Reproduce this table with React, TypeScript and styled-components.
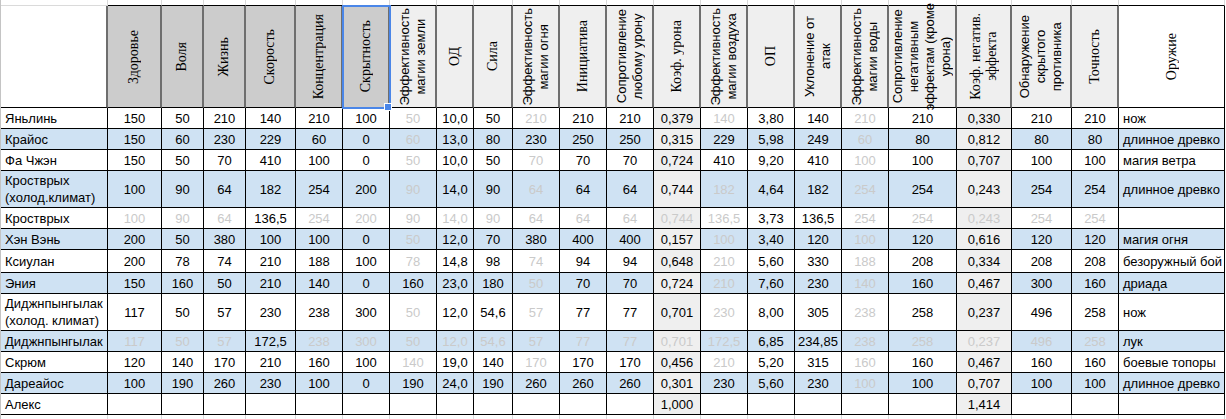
import React from "react";
import styled, { createGlobalStyle } from "styled-components";

const GlobalStyle = createGlobalStyle`
  html, body {
    margin: 0;
    padding: 0;
    background: #ffffff;
  }
  body {
    font-family: "Liberation Sans", Arial, sans-serif;
    color: #000;
  }
`;

const WIDTHS = [
  107, 54, 42, 42, 50, 47, 47, 47, 37, 39, 47, 47, 47, 47, 47, 47, 47, 47, 68,
  55, 60, 47, 106,
];

// columns with the light grey fill (Коэф. урона, Коэф. негатив. эффекта)
const GREY_COLS = [12, 18];

type Tone = "blank" | "dark" | "light" | "white";

interface IHead {
  label: string;
  serif: boolean;
  tone: Tone;
  selected?: boolean;
}

const HEADS: IHead[] = [
  { label: "Здоровье", serif: true, tone: "dark" },
  { label: "Воля", serif: true, tone: "dark" },
  { label: "Жизнь", serif: true, tone: "dark" },
  { label: "Скорость", serif: true, tone: "dark" },
  { label: "Концентрация", serif: true, tone: "dark" },
  { label: "Скрытность", serif: true, tone: "dark", selected: true },
  { label: "Эффективность\nмагии земли", serif: false, tone: "light" },
  { label: "ОД", serif: true, tone: "light" },
  { label: "Сила", serif: true, tone: "light" },
  { label: "Эффективность\nмагии огня", serif: false, tone: "light" },
  { label: "Инициатива", serif: true, tone: "light" },
  { label: "Сопротивление\nлюбому урону", serif: false, tone: "light" },
  { label: "Коэф. урона", serif: true, tone: "light" },
  { label: "Эффективность\nмагии воздуха", serif: false, tone: "light" },
  { label: "ОП", serif: true, tone: "light" },
  { label: "Уклонение от\nатак", serif: false, tone: "light" },
  { label: "Эффективность\nмагии воды", serif: false, tone: "light" },
  {
    label: "Сопротивление\nнегативным\nэффектам (кроме\nурона)",
    serif: false,
    tone: "light",
  },
  { label: "Коэф. негатив.\nэффекта", serif: true, tone: "light" },
  { label: "Обнаружение\nскрытого\nпротивника", serif: false, tone: "light" },
  { label: "Точность", serif: true, tone: "light" },
  { label: "Оружие", serif: true, tone: "white" },
];

interface IRow {
  name: string;
  blue: boolean;
  h: number;
  cells: string[];
}

// "~" marks a value shown in faded grey
const ROWS: IRow[] = [
  {
    name: "Яньлинь",
    blue: false,
    h: 21,
    cells: ["150", "50", "210", "140", "210", "100", "~50", "10,0", "50", "~210", "210", "210", "0,379", "~140", "3,80", "140", "~210", "210", "0,330", "210", "210", "нож"],
  },
  {
    name: "Крайос",
    blue: true,
    h: 21,
    cells: ["150", "60", "230", "229", "60", "0", "~60", "13,0", "80", "230", "250", "250", "0,315", "229", "5,98", "249", "~60", "80", "0,812", "80", "80", "длинное древко"],
  },
  {
    name: "Фа Чжэн",
    blue: false,
    h: 21,
    cells: ["150", "50", "70", "410", "100", "0", "~50", "10,0", "50", "~70", "70", "70", "0,724", "410", "9,20", "410", "~100", "100", "0,707", "100", "100", "магия ветра"],
  },
  {
    name: "Кростврых\n(холод.климат)",
    blue: true,
    h: 37,
    cells: ["100", "90", "64", "182", "254", "200", "~90", "14,0", "90", "~64", "64", "64", "0,744", "~182", "4,64", "182", "~254", "254", "0,243", "254", "254", "длинное древко"],
  },
  {
    name: "Кростврых",
    blue: false,
    h: 21,
    cells: ["~100", "~90", "~64", "136,5", "~254", "~200", "~90", "~14,0", "~90", "~64", "~64", "~64", "~0,744", "~136,5", "3,73", "136,5", "~254", "~254", "~0,243", "~254", "~254", ""],
  },
  {
    name: "Хэн Вэнь",
    blue: true,
    h: 21,
    cells: ["200", "50", "380", "100", "100", "0", "~50", "12,0", "70", "380", "400", "400", "0,157", "~100", "3,40", "120", "~100", "120", "0,616", "120", "120", "магия огня"],
  },
  {
    name: "Ксиулан",
    blue: false,
    h: 23,
    cells: ["200", "78", "74", "210", "188", "100", "~78", "14,8", "98", "~74", "94", "94", "0,648", "~210", "5,60", "330", "~188", "208", "0,334", "208", "208", "безоружный бой"],
  },
  {
    name: "Эния",
    blue: true,
    h: 21,
    cells: ["150", "160", "50", "210", "140", "0", "160", "23,0", "180", "~50", "70", "70", "0,724", "~210", "7,60", "230", "~140", "160", "0,467", "300", "160", "дриада"],
  },
  {
    name: "Диджнпынгылак\n(холод. климат)",
    blue: false,
    h: 37,
    cells: ["117", "50", "57", "230", "238", "300", "~50", "12,0", "54,6", "~57", "77", "77", "0,701", "~230", "8,00", "305", "~238", "258", "0,237", "496", "258", "нож"],
  },
  {
    name: "Диджнпынгылак",
    blue: true,
    h: 21,
    cells: ["~117", "~50", "~57", "172,5", "~238", "~300", "~50", "~12,0", "~54,6", "~57", "~77", "~77", "~0,701", "~172,5", "6,85", "234,85", "~238", "~258", "~0,237", "~496", "~258", "лук"],
  },
  {
    name: "Скрюм",
    blue: false,
    h: 21,
    cells: ["120", "140", "170", "210", "160", "100", "~140", "19,0", "140", "~170", "170", "170", "0,456", "~210", "5,20", "315", "~160", "160", "0,467", "160", "160", "боевые топоры"],
  },
  {
    name: "Дареайос",
    blue: true,
    h: 21,
    cells: ["100", "190", "260", "230", "100", "0", "190", "24,0", "190", "260", "260", "260", "0,301", "230", "5,60", "230", "~100", "100", "0,707", "100", "100", "длинное древко"],
  },
  {
    name: "Алекс",
    blue: false,
    h: 21,
    cells: ["", "", "", "", "", "", "", "", "", "", "", "", "1,000", "", "", "", "", "", "1,414", "", "", ""],
  },
];

const Sheet = styled.div<{ $rows: string }>`
  display: grid;
  grid-template-columns: ${WIDTHS.map((w) => `${w}px`).join(" ")};
  grid-template-rows: ${(p) => p.$rows};
  width: max-content;
  border-left: 1px solid #c4c4c4;
  overflow: hidden;
  height: 419px;
`;

const Gap = styled.div<{ $line: "none" | "light" | "dark" }>`
  box-sizing: border-box;
  border-right: 1px solid #dadada;
  border-bottom: ${(p) =>
    p.$line === "none"
      ? "0"
      : p.$line === "dark"
      ? "1px solid #000"
      : "1px solid #dadada"};
`;

const HEAD_BG: Record<Tone, string> = {
  blank: "#ffffff",
  dark: "#cccccc",
  light: "#efefef",
  white: "#ffffff",
};

const HeadCell = styled.div<{ $tone: Tone; $selected?: boolean }>`
  position: relative;
  box-sizing: border-box;
  display: flex;
  align-items: center;
  justify-content: center;
  background: ${(p) => HEAD_BG[p.$tone]};
  border-right: ${(p) =>
    p.$tone === "white" ? "1px solid #000" : "2px solid #6e6e6e"};
  border-bottom: 1px solid #000;
  outline: ${(p) => (p.$selected ? "2px solid #4a86e8" : "none")};
  outline-offset: -1px;
  z-index: ${(p) => (p.$selected ? 2 : 0)};
`;

const Handle = styled.span`
  position: absolute;
  right: -4px;
  bottom: -4px;
  width: 6px;
  height: 6px;
  background: #4a86e8;
  border: 1px solid #ffffff;
`;

const HeadLabel = styled.span<{ $serif: boolean }>`
  writing-mode: vertical-rl;
  transform: rotate(180deg);
  white-space: pre;
  text-align: center;
  font-family: ${(p) =>
    p.$serif
      ? '"Liberation Serif", "Times New Roman", serif'
      : '"Liberation Sans", Arial, sans-serif'};
  font-size: ${(p) => (p.$serif ? "14px" : "13px")};
  line-height: 16px;
  color: #000;
`;

type Fill = "white" | "blue" | "grey";

const FILL: Record<Fill, string> = {
  white: "#ffffff",
  blue: "#cfe2f3",
  grey: "#efefef",
};

const Cell = styled.div<{ $fill: Fill; $faded?: boolean; $left?: boolean }>`
  box-sizing: border-box;
  display: flex;
  align-items: center;
  justify-content: ${(p) => (p.$left ? "flex-start" : "center")};
  padding: ${(p) => (p.$left ? "0 3px 0 4px" : "0 2px")};
  background: ${(p) => FILL[p.$fill]};
  color: ${(p) => (p.$faded ? "#cacaca" : "#000")};
  border-right: 1px solid #000;
  border-bottom: 1px solid #000;
  font-size: 13px;
  line-height: 17px;
  white-space: pre;
  overflow: hidden;
`;

const App = () => {
  const rowSizes = ["6px", "102px", ...ROWS.map((r) => `${r.h}px`), "5px"].join(
    " "
  );

  return (
    <>
      <GlobalStyle />
      <Sheet $rows={rowSizes}>
        {WIDTHS.map((_, i) => (
          <Gap key={`top-${i}`} $line={i === 0 ? "light" : "dark"} />
        ))}

        <HeadCell $tone="blank" />
        {HEADS.map((h) => (
          <HeadCell key={h.label} $tone={h.tone} $selected={h.selected}>
            <HeadLabel $serif={h.serif}>{h.label}</HeadLabel>
            {h.selected && <Handle />}
          </HeadCell>
        ))}

        {ROWS.map((row, r) => (
          <React.Fragment key={r}>
            <Cell $fill={row.blue ? "blue" : "white"} $left>
              {row.name}
            </Cell>
            {row.cells.map((value, c) => {
              const faded = value.startsWith("~");
              const fill: Fill = GREY_COLS.includes(c)
                ? "grey"
                : row.blue
                ? "blue"
                : "white";
              return (
                <Cell
                  key={c}
                  $fill={fill}
                  $faded={faded}
                  $left={c === row.cells.length - 1}
                >
                  {faded ? value.slice(1) : value}
                </Cell>
              );
            })}
          </React.Fragment>
        ))}

        {WIDTHS.map((_, i) => (
          <Gap key={`bottom-${i}`} $line="none" />
        ))}
      </Sheet>
    </>
  );
};

export default App;
